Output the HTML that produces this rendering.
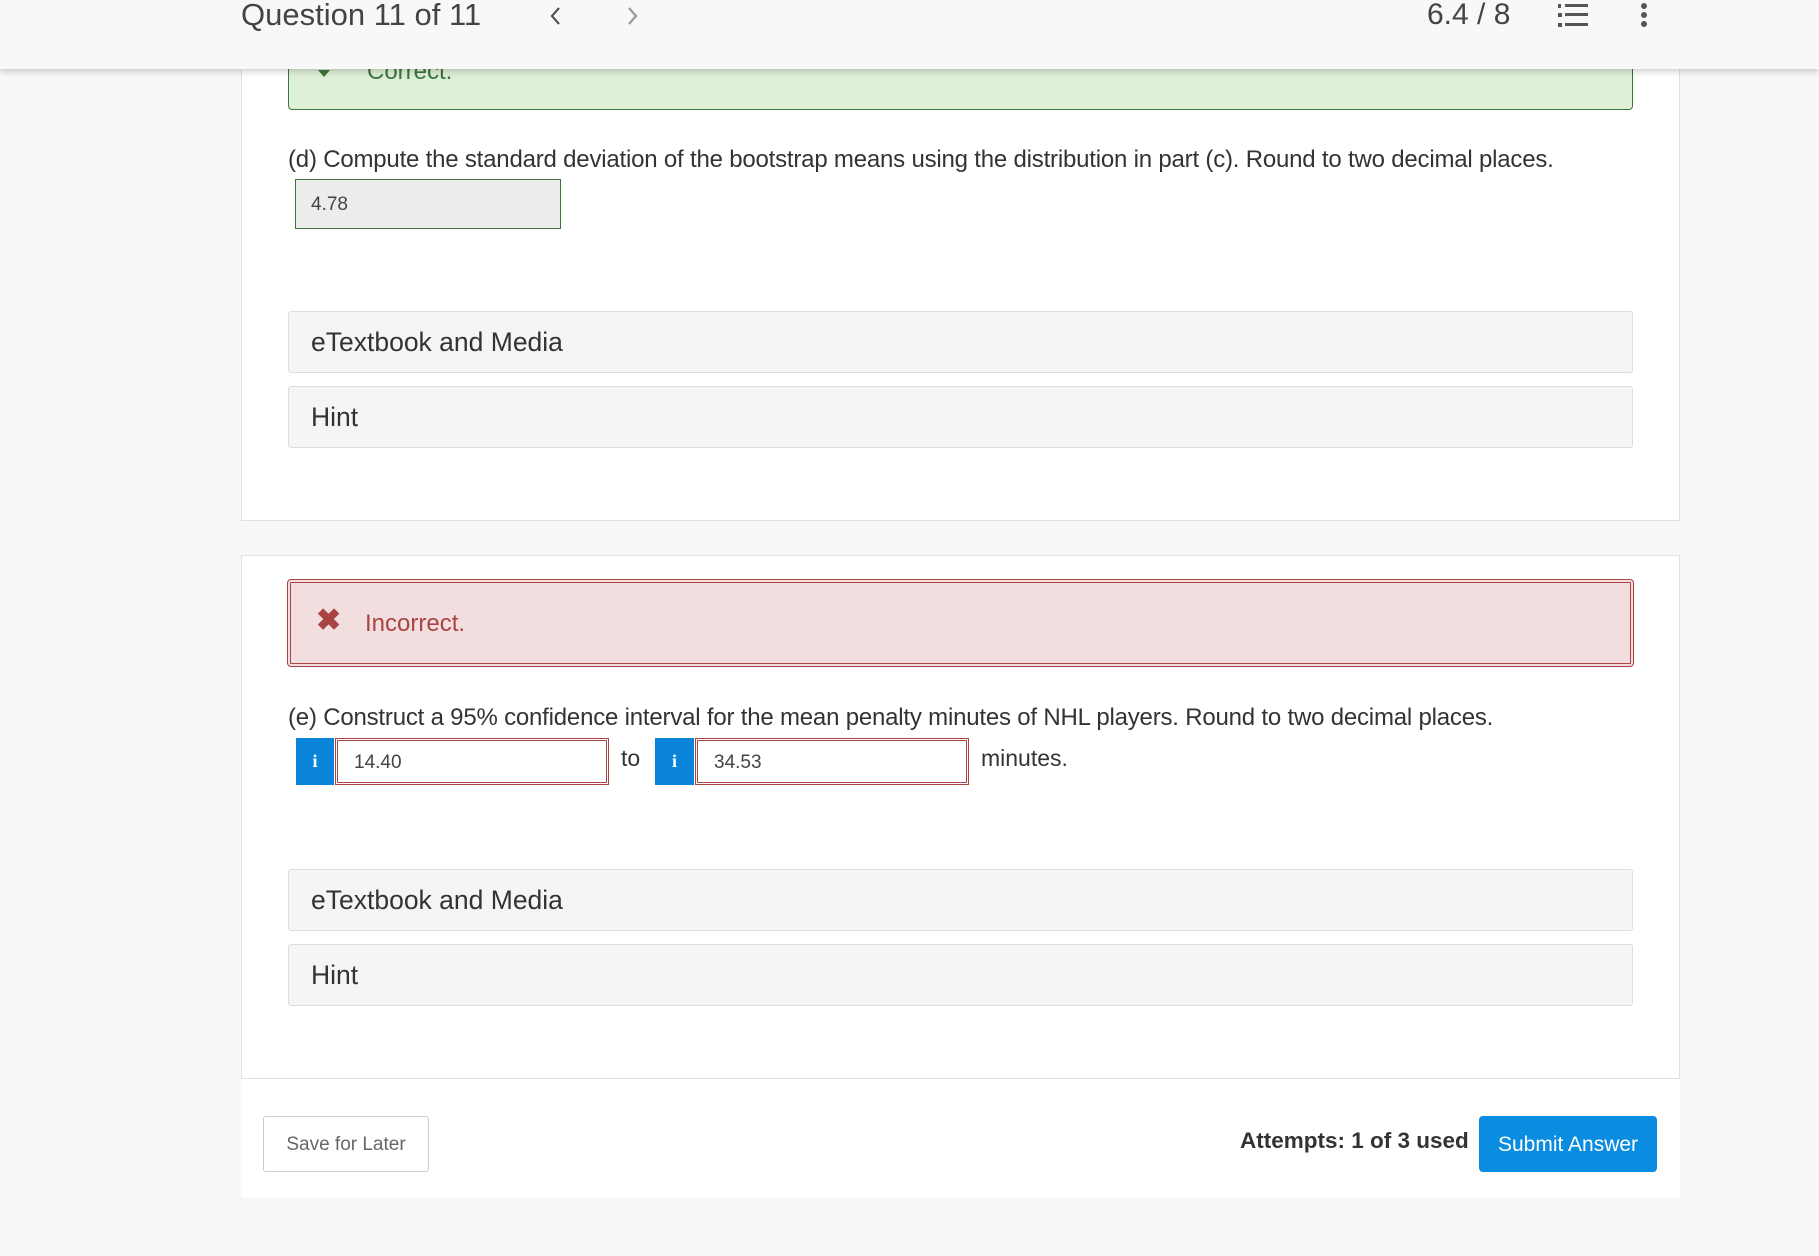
<!DOCTYPE html>
<html><head><meta charset="utf-8"><style>
*{box-sizing:border-box;margin:0;padding:0}
body{width:1819px;height:1256px;background:#f8f8f8;font-family:"Liberation Sans",sans-serif;color:#333;position:relative;overflow:hidden}
.a{position:absolute}
.card{background:#fff;border:1px solid #e2e2e2}
.bar{position:absolute;left:288px;width:1345px;height:62px;background:#f5f5f5;border:1px solid #ddd;border-radius:3px;font-size:26.5px;color:#333;padding-left:22px;line-height:60px}
.q{font-size:24px;color:#333;letter-spacing:-0.2px}
.info{background:#0a84d9;color:#fff;font-weight:bold;font-size:18px;text-align:center;line-height:47px;font-family:"Liberation Serif",serif}
.inp{border:3px double #a94442;background:#fff;font-size:19px;color:#444;padding-left:16px;line-height:41px}
</style></head><body>
<div class="a card" style="left:241px;top:0;width:1439px;height:521px"></div>
<div class="a card" style="left:241px;top:555px;width:1439px;height:524px"></div>
<div class="a" style="left:241px;top:1079px;width:1439px;height:118px;background:#fff"></div>

<div class="a" style="left:288px;top:40px;width:1345px;height:70px;background:#dff0d8;border:1px solid #3c763d;border-radius:0 0 4px 4px"></div>
<div class="a" style="left:367px;top:58px;font-size:24px;color:#3c763d">Correct.</div>
<div class="a" style="left:318px;top:70px;width:0;height:0;border-left:6px solid transparent;border-right:6px solid transparent;border-top:7px solid #3c763d"></div>

<div class="a" style="left:0;top:0;width:1819px;height:69px;background:#f8f8f8;box-shadow:0 3px 6px rgba(0,0,0,.18)"></div>
<div class="a" style="left:241px;top:-3px;font-size:31px;color:#444">Question 11 of 11</div>
<svg class="a" style="left:546px;top:4px" width="20" height="24"><path d="M13 4 L6 12 L13 20" stroke="#555" stroke-width="2.2" fill="none"/></svg>
<svg class="a" style="left:622px;top:4px" width="20" height="24"><path d="M7 4 L14 12 L7 20" stroke="#999" stroke-width="2.2" fill="none"/></svg>
<div class="a" style="left:1427px;top:-2px;font-size:30px;color:#444">6.4 / 8</div>
<svg class="a" style="left:1556px;top:2px" width="34" height="26"><g fill="#555"><rect x="9" y="2" width="23" height="3"/><rect x="9" y="11" width="23" height="3"/><rect x="9" y="21" width="23" height="3"/><rect x="2" y="2" width="3" height="4"/><rect x="2" y="11" width="4" height="4"/><rect x="2" y="21" width="4" height="4"/></g></svg>
<svg class="a" style="left:1638px;top:2px" width="12" height="26"><g fill="#555"><circle cx="6" cy="4" r="3"/><circle cx="6" cy="13" r="3"/><circle cx="6" cy="22" r="3"/></g></svg>

<div class="a q" style="left:288px;top:146px">(d) Compute the standard deviation of the bootstrap means using the distribution in part (c). Round to two decimal places.</div>
<div class="a" style="left:295px;top:179px;width:266px;height:50px;background:#ececec;border:1px solid #3c763d;font-size:19px;color:#444;padding-left:15px;line-height:50px">4.78</div>
<div class="bar" style="top:311px">eTextbook and Media</div>
<div class="bar" style="top:386px">Hint</div>

<div class="a" style="left:287px;top:579px;width:1347px;height:88px;background:#f2dede;border:4px double #a94442;border-radius:4px"></div>
<div class="a" style="left:316px;top:603px;font-size:30px;font-weight:bold;color:#a94442">✖</div>
<div class="a" style="left:365px;top:610px;font-size:24px;color:#a94442">Incorrect.</div>

<div class="a q" style="left:288px;top:704px">(e) Construct a 95% confidence interval for the mean penalty minutes of NHL players. Round to two decimal places.</div>
<div class="a info" style="left:296px;top:738px;width:38px;height:47px">i</div>
<div class="a inp" style="left:335px;top:738px;width:274px;height:47px;line-height:43px">14.40</div>
<div class="a" style="left:621px;top:745px;font-size:23px">to</div>
<div class="a info" style="left:655px;top:738px;width:39px;height:47px">i</div>
<div class="a inp" style="left:695px;top:738px;width:274px;height:47px;line-height:43px">34.53</div>
<div class="a" style="left:981px;top:745px;font-size:23px">minutes.</div>
<div class="bar" style="top:869px">eTextbook and Media</div>
<div class="bar" style="top:944px">Hint</div>

<div class="a" style="left:263px;top:1116px;width:166px;height:56px;border:1px solid #ccc;border-radius:3px;background:#fff;font-size:19px;color:#666;text-align:center;line-height:56px">Save for Later</div>
<div class="a" style="left:1240px;top:1128px;font-size:22.5px;font-weight:bold;color:#333">Attempts: 1 of 3 used</div>
<div class="a" style="left:1479px;top:1116px;width:178px;height:56px;border-radius:4px;background:#0a8ce0;color:#fff;font-size:21px;text-align:center;line-height:58px">Submit Answer</div>
</body></html>
